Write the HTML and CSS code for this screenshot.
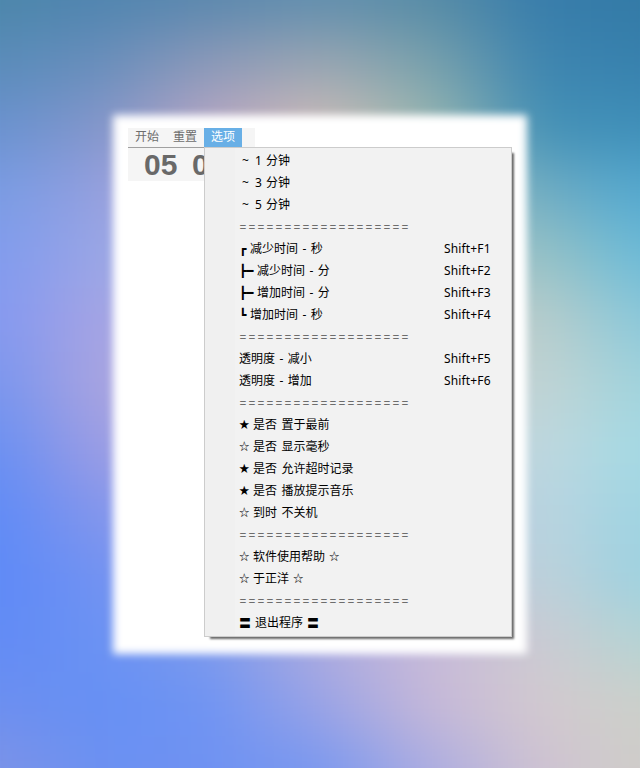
FILE: index.html
```html
<!DOCTYPE html>
<html lang="zh-CN">
<head>
<meta charset="utf-8">
<title>选项</title>
<link rel="stylesheet" href="styles.css">
</head>
<body>
<div class="wallpaper"></div>
<main class="panel">
  <section class="timer">
    <nav class="menubar"><span>开始</span><span>重置</span><span class="active">选项</span></nav>
    <div class="clock">05  00</div>
    <ul class="menu">
      <li><span class="tilde">~</span><span class="digit">1</span>分钟</li>
      <li><span class="tilde">~</span><span class="digit">3</span>分钟</li>
      <li><span class="tilde">~</span><span class="digit">5</span>分钟</li>
      <li class="rule">===================</li>
      <li><span class="corner">┏</span>减少时间 - 秒<kbd>Shift+F1</kbd></li>
      <li><span class="branch">┣━</span>减少时间 - 分<kbd>Shift+F2</kbd></li>
      <li><span class="branch">┣━</span>增加时间 - 分<kbd>Shift+F3</kbd></li>
      <li><span class="corner">┗</span>增加时间 - 秒<kbd>Shift+F4</kbd></li>
      <li class="rule">===================</li>
      <li>透明度 - 减小<kbd>Shift+F5</kbd></li>
      <li>透明度 - 增加<kbd>Shift+F6</kbd></li>
      <li class="rule">===================</li>
      <li><span class="star">★</span>是否 置于最前</li>
      <li><span class="star">☆</span>是否 显示毫秒</li>
      <li><span class="star">★</span>是否 允许超时记录</li>
      <li><span class="star">★</span>是否 播放提示音乐</li>
      <li><span class="star">☆</span>到时 不关机</li>
      <li class="rule">===================</li>
      <li><span class="star">☆</span>软件使用帮助<span class="star end">☆</span></li>
      <li><span class="star">☆</span>于正洋<span class="star end">☆</span></li>
      <li class="rule">===================</li>
      <li><span class="bars">〓</span>退出程序<span class="bars end">〓</span></li>
    </ul>
  </section>
</main>
</body>
</html>
```

FILE: styles.css
```css
* { box-sizing: border-box; }
html { background: #7f9fe0; }
body {
  position: relative;
  margin: 0;
  width: 640px;
  height: 768px;
  overflow: hidden;
  padding: 128px 0 0 128px;
  font: 12px/22px "Noto Sans", "Noto Sans CJK SC", sans-serif;
}
.wallpaper {
  position: absolute;
  inset: 0;
  overflow: hidden;
}
/* Horizontal colour bands melted together by the blur */
.wallpaper::before {
  content: "";
  position: absolute;
  inset: -96px -64px;
  filter: blur(27px);
  background-repeat: no-repeat;
  background-image:
    linear-gradient(90deg, #4c86aa 64px, #5085b0 164px, #5c88ae 274px, #638fae 384px, #588ca6 494px, #387dab 604px, #337aa6 704px),
    linear-gradient(90deg, #5a8cba 64px, #698ebc 164px, #8d99b9 274px, #9ba6b2 384px, #7aa2ac 494px, #3e85b0 604px, #3781ae 704px),
    linear-gradient(90deg, #6a92d0 64px, #8396cb 164px, #b8a6c4 274px, #cfbdb8 384px, #9ab8b0 494px, #4491b6 604px, #3f8fb9 704px),
    linear-gradient(90deg, #7a9ce4 64px, #939fe0 164px, #c8b0cc 274px, #d4c8c0 384px, #a8c4b8 494px, #70acc2 604px, #54a9d0 704px),
    linear-gradient(90deg, #819bee 64px, #9aa6e6 164px, #b8bed8 384px, #98c2c4 604px, #6cbbd8 704px),
    linear-gradient(90deg, #8599f0 64px, #a5a3e4 164px, #b8bed8 384px, #bacdca 604px, #8ac8da 704px),
    linear-gradient(90deg, #7a96ee 64px, #a9a3e0 164px, #b8bed8 384px, #c3d4d3 604px, #a0d3dc 704px),
    linear-gradient(90deg, #6a90f2 64px, #9c9ce4 164px, #b8bed8 384px, #c0d8de 604px, #a4d9e4 704px),
    linear-gradient(90deg, #608bf6 64px, #8496ec 164px, #a8a9e0 384px, #bbd5e0 604px, #9fd4e2 704px),
    linear-gradient(90deg, #5e8af7 64px, #7192f2 164px, #a8a9e0 384px, #bfd2da 604px, #9dd1e0 704px),
    linear-gradient(90deg, #628bf5 64px, #6a92f3 164px, #7d9aec 274px, #aeabde 384px, #c8bad9 494px, #cccbd2 604px, #b4d4d4 704px),
    linear-gradient(90deg, #6c8ff0 64px, #6690f4 164px, #6f94f3 274px, #9aa3e6 384px, #c6b8d8 494px, #d3c9cf 604px, #ccd0ca 704px),
    linear-gradient(90deg, #7c93e7 64px, #6b90f2 164px, #6f92f2 274px, #7a98ef 384px, #acace1 494px, #cfc2d2 604px, #cfcdc9 704px);
  background-size: 100% 128px, 100% 64px, 100% 64px, 100% 64px, 100% 64px, 100% 64px, 100% 64px, 100% 64px, 100% 64px, 100% 64px, 100% 64px, 100% 64px, 100% 128px;
  background-position: 0 0, 0 128px, 0 192px, 0 256px, 0 320px, 0 384px, 0 448px, 0 512px, 0 576px, 0 640px, 0 704px, 0 768px, 0 832px;
}
.panel {
  position: relative;
  width: 384px;
  height: 512px;
}
.panel::before {
  content: "";
  position: absolute;
  inset: -13px -15px -14px -15px;
  background: #fff;
  filter: blur(4px);
}
.timer {
  position: relative;
  width: 127px;
  height: 53px;
  background: #f5f5f5;
}
.menubar {
  display: flex;
  height: 20px;
  border-bottom: 1px solid #a0a0a0;
  color: #6d6d6d;
  line-height: 18px;
}
.menubar span { width: 38px; text-align: center; }
.menubar .active { background: #68afe6; color: #fff; }
.clock {
  height: 33px;
  padding-left: 16px;
  overflow: hidden;
  white-space: pre;
  word-spacing: -1px;
  font: bold 30px/34px "Liberation Sans", sans-serif;
  color: #696969;
}
.menu {
  position: absolute;
  left: 76px;
  top: 19px;
  width: 308px;
  height: 490px;
  margin: 0;
  padding: 2px 3px 3px 34px;
  list-style: none;
  background: linear-gradient(90deg, #f0f0f0 30px, #f2f2f2 30px);
  border: 1px solid #ccc;
  box-shadow: 4px 4px 2px -2px #444c;
  color: #000;
}
.menu li {
  display: flex;
  height: 22px;
  white-space: pre;
  word-spacing: 1.3px;
}
.menu kbd {
  width: 64px;
  margin-left: auto;
  font: inherit;
  letter-spacing: .15px;
}
.menu .rule {
  padding-left: .5px;
  line-height: 24px;
  color: #6d6d6d;
  letter-spacing: 2.13px;
}
.tilde { width: 16px; padding-left: 3px; }
.digit { width: 11px; }
.star, .bars { font-family: "Noto Sans CJK SC", sans-serif; }
.corner, .branch { font-family: "DejaVu Sans Mono", monospace; }
.corner { width: 11px; }
.branch { width: 18px; }
.star { width: 14px; font-size: 10.5px; line-height: 20px; }
.bars { width: 16px; }
.end { margin-left: 4px; }
```
